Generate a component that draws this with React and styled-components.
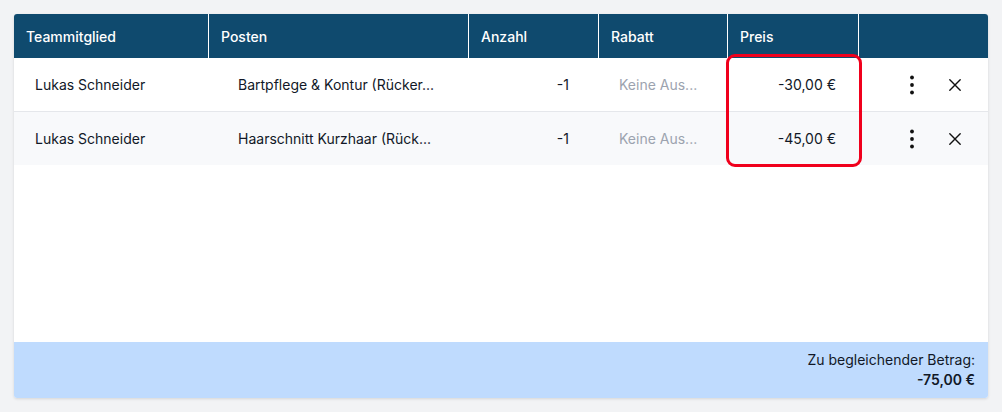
import React from "react";
import styled, { createGlobalStyle } from "styled-components";

const GlobalStyle = createGlobalStyle`
  body {
    margin: 0;
    background: #f2f3f5;
    font-family: Inter, "Noto Sans", sans-serif;
    color: #111827;
  }
`;

const columns = "194px 260px 130px 129px 131px 130px";

// texts as shown in the cells (already shortened by the app)
const rows = [
  { member: "Lukas Schneider", item: "Bartpflege & Kontur (Rücker...", qty: "-1", discount: "Keine Aus...", price: "-30,00 €" },
  { member: "Lukas Schneider", item: "Haarschnitt Kurzhaar (Rück...", qty: "-1", discount: "Keine Aus...", price: "-45,00 €" },
];

export default function App() {
  return (
    <Page>
      <GlobalStyle />
      <Card>
        <HeaderRow>
          <HeadCell>Teammitglied</HeadCell>
          <HeadCell>Posten</HeadCell>
          <HeadCell>Anzahl</HeadCell>
          <HeadCell>Rabatt</HeadCell>
          <HeadCell>Preis</HeadCell>
          <HeadCell />
        </HeaderRow>
        <Body>
          {rows.map((r, i) => (
            <Row key={i} $striped={i % 2 === 1}>
              <Cell $pl={21}>{r.member}</Cell>
              <Cell $pl={30}>{r.item}</Cell>
              <Cell $pr={29} $right>{r.qty}</Cell>
              <Cell $pl={21} $muted>{r.discount}</Cell>
              <Cell $pr={22} $right>{r.price}</Cell>
              <Actions>
                <IconButton aria-label="Mehr">
                  <svg width="18" height="20" viewBox="0 0 18 20">
                    <circle cx="9" cy="2.5" r="1.9" fill="#111" />
                    <circle cx="9" cy="10" r="1.9" fill="#111" />
                    <circle cx="9" cy="17.5" r="1.9" fill="#111" />
                  </svg>
                </IconButton>
                <IconButton aria-label="Entfernen">
                  <svg width="14" height="14" viewBox="0 0 14 14">
                    <path d="M1.8 1.8 L12.2 12.2 M12.2 1.8 L1.8 12.2" stroke="#111" strokeWidth="1.4" strokeLinecap="round" />
                  </svg>
                </IconButton>
              </Actions>
            </Row>
          ))}
          <Highlight />
        </Body>
        <Footer>
          <span>Zu begleichender Betrag:</span>
          <Total>-75,00 €</Total>
        </Footer>
      </Card>
    </Page>
  );
}

const Page = styled.div`
  padding: 14px;
`;

const Card = styled.div`
  width: 974px;
  height: 384px;
  display: flex;
  flex-direction: column;
  background: #fff;
  border-radius: 3px;
  box-shadow: 0 1px 3px rgba(0, 0, 0, 0.12);
  overflow: hidden;
`;

const HeaderRow = styled.div`
  display: grid;
  grid-template-columns: ${columns};
  height: 44px;
  background: #0f4a6e;
`;

const HeadCell = styled.div`
  display: flex;
  align-items: center;
  padding: 0 12px;
  color: #fff;
  font-size: 14px;
  font-weight: 500;
  & + & {
    border-left: 1px solid #fff;
  }
`;

const Body = styled.div`
  position: relative;
  flex: 1;
`;

const Row = styled.div`
  display: grid;
  grid-template-columns: ${columns};
  height: 53px;
  background: ${(p) => (p.$striped ? "#f8f9fb" : "#fff")};
  & + & {
    border-top: 1px solid #e5e7eb;
  }
`;

const Cell = styled.div`
  display: flex;
  align-items: center;
  justify-content: ${(p) => (p.$right ? "flex-end" : "flex-start")};
  padding-left: ${(p) => p.$pl || 0}px;
  padding-right: ${(p) => p.$pr || 0}px;
  white-space: nowrap;
  font-size: 14px;
  color: ${(p) => (p.$muted ? "#9ca3af" : "#111827")};
`;

const Actions = styled.div`
  display: flex;
  align-items: center;
  padding-left: 45px;
  gap: 26px;
`;

const IconButton = styled.button`
  display: flex;
  align-items: center;
  justify-content: center;
  min-width: 16px;
  padding: 0;
  border: none;
  background: none;
  cursor: pointer;
`;

const Highlight = styled.div`
  position: absolute;
  left: 712px;
  top: -4px;
  width: 136px;
  height: 113px;
  box-sizing: border-box;
  border: 3px solid #f0001c;
  border-radius: 9px;
  pointer-events: none;
`;

const Footer = styled.div`
  display: flex;
  flex-direction: column;
  align-items: flex-end;
  justify-content: center;
  height: 56px;
  padding: 0 13px;
  background: #bfdbfe;
  font-size: 14px;
  line-height: 20px;
  color: #111827;
`;

const Total = styled.span`
  font-weight: 600;
`;
